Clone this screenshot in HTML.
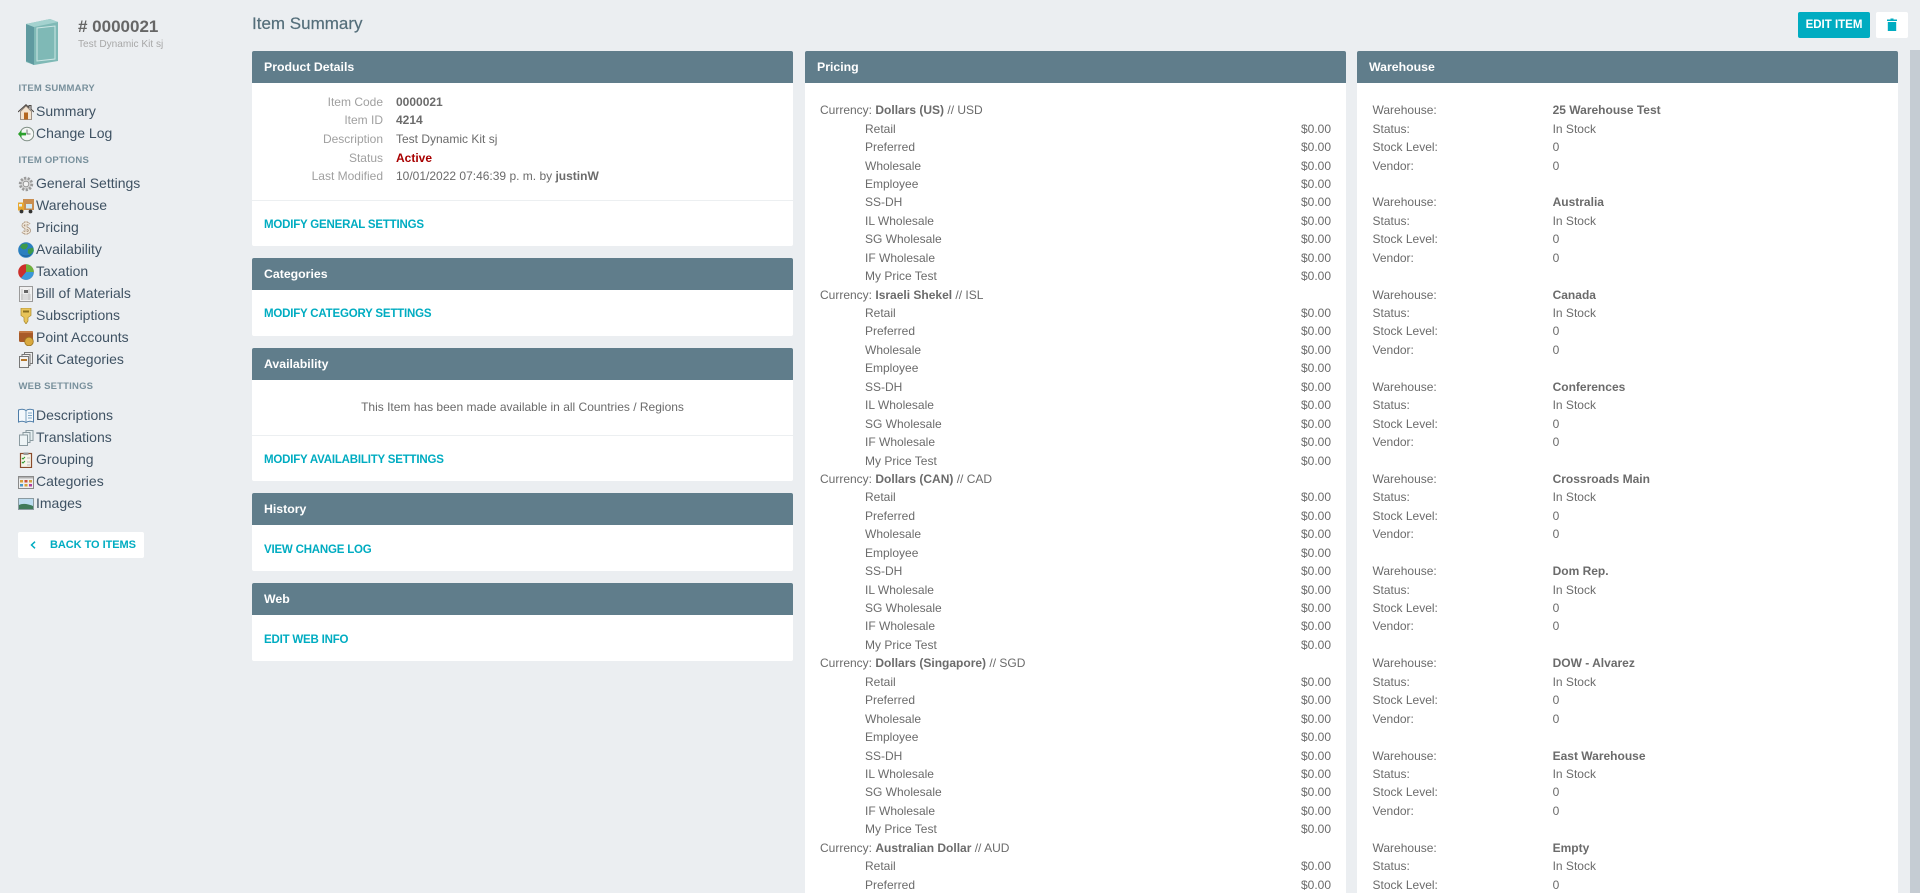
<!DOCTYPE html>
<html><head><meta charset="utf-8"><title>Item Summary</title>
<style>
html,body{margin:0;padding:0;width:1920px;height:893px;overflow:hidden;background:#ebeef1;font-family:"Liberation Sans",sans-serif;font-size:12px;color:#6b6b6b}
.a{position:absolute}
.nav{position:absolute;left:36px;font-size:14px;line-height:22px;height:22px;color:#3f5263;white-space:nowrap;margin-top:-1px}
.ic{position:absolute;left:18px;width:16px;height:16px}
.sec{position:absolute;left:18.5px;font-size:9.5px;font-weight:bold;color:#78909c;line-height:12px;letter-spacing:.2px}
.p{position:absolute;background:#fff;border-radius:2px;overflow:hidden}
.h{height:32px;line-height:32px;background:#607d8b;color:#fff;font-weight:bold;font-size:12.3px;padding-left:12px}
.l{position:absolute;left:12px;color:#00acc1;font-weight:bold;font-size:11.5px;letter-spacing:-.2px;line-height:14px;white-space:nowrap;margin-top:1px}
.hr{position:absolute;left:0;right:0;height:1px;background:#eceff1}
.d{position:absolute;right:410px;text-align:right;color:#a0a0a0;line-height:18px;white-space:nowrap}
.v{position:absolute;left:144px;line-height:18px;white-space:nowrap}
.r{display:flex;height:18.45px;line-height:18.45px;white-space:nowrap}
#pr{position:absolute;left:15px;right:15px;top:50.2px}
#pr i{font-style:normal;padding-left:45px;flex:1}
#wh{position:absolute;left:15.500px;top:50.2px}
#wh span{width:180.1px}
</style></head><body>

<svg class="a" style="left:24px;top:17px" width="36" height="50" viewBox="0 0 36 50">
<polygon points="2,7 26,2 34,5 34,44 10,48 2,45" fill="#7fb9b6"/>
<polygon points="2,7 10,10 10,48 2,44" fill="#5f9aa0"/>
<polygon points="2,7 26,2 34,5 10,10" fill="#a4d2cf"/>
<polygon points="13,11 31,9 31,42 13,44" fill="none" stroke="#cde6e4" stroke-width="1"/>
</svg>
<div class="a" style="left:78px;top:17px;font-size:17px;font-weight:bold;color:#666;line-height:20px">#&nbsp;0000021</div>
<div class="a" style="left:78px;top:38px;font-size:10.1px;color:#a8a8a8;line-height:13px">Test Dynamic Kit sj</div>

<div class="sec" style="top:83px">ITEM SUMMARY</div>
<svg class="ic" style="top:104px" viewBox="0 0 16 16"><path d="M2.500 7.500V15.500h11V7.500L8 2z" fill="#f3e3cf" stroke="#8a7a6c" stroke-width=".8"/><path d="M0 8 8 .8 11 3.500V1.500h2v3.800L16 8" fill="none" stroke="#4f4a46" stroke-width="1.100"/><rect x="6" y="8.500" width="4" height="7" fill="#b4661e"/></svg>
<div class="nav" style="top:101px">Summary</div>
<svg class="ic" style="top:126px" viewBox="0 0 16 16"><circle cx="9" cy="8" r="6.800" fill="#f4f6f4" stroke="#7a8a80" stroke-width="1"/><path d="M9 3.500V8h3.500" fill="none" stroke="#555" stroke-width=".8"/><path d="M0 8l3.500-4V6.800H8v2.600H3.500V12z" fill="#2ca02c"/></svg>
<div class="nav" style="top:123px">Change Log</div>

<div class="sec" style="top:155px">ITEM OPTIONS</div>
<svg class="ic" style="top:176px" viewBox="0 0 16 16"><circle cx="8" cy="8" r="5.800" fill="#d5d5d5" stroke="#9a9a9a" stroke-width="2.800" stroke-dasharray="2.200 1.400"/><circle cx="8" cy="8" r="2.800" fill="#f2f2f2" stroke="#888" stroke-width=".8"/></svg>
<div class="nav" style="top:173px">General Settings</div>
<svg class="ic" style="top:198px" viewBox="0 0 16 16"><rect x="5" y="1" width="11" height="11" fill="#c98e50"/><rect x="0" y="4.500" width="6" height="8" fill="#e8a830"/><rect x="8" y="6" width="6" height="4.500" fill="#cfe8f5"/><rect x="1" y="6" width="3" height="2.500" fill="#dff0f8"/><circle cx="3.500" cy="13.500" r="1.900" fill="#333"/><circle cx="12.500" cy="13.500" r="1.900" fill="#333"/></svg>
<div class="nav" style="top:195px">Warehouse</div>
<svg class="ic" style="top:220px" viewBox="0 0 16 16"><g fill="none"><path d="M11.500 4.500C10 3 5 3 5 5.500S11.500 7.500 11.500 10.500 6 13 4.500 11.500M8 1v14" stroke="#a89078" stroke-width="2.800"/><path d="M11.500 4.500C10 3 5 3 5 5.500S11.500 7.500 11.500 10.500 6 13 4.500 11.500M8 1v14" stroke="#f0e8dc" stroke-width="1.400"/></g></svg>
<div class="nav" style="top:217px">Pricing</div>
<svg class="ic" style="top:242px" viewBox="0 0 16 16"><circle cx="8" cy="8" r="7.800" fill="#2a7fc0"/><path d="M4 2 9 1.500 10 4 8 7 5 7.500 2 5zM10 7l5-1.500.8 3.500-3.500 4-2.500-2z" fill="#3d9a4a"/><path d="M2 11c3 3.500 9 3.500 12 0-3 5-9 5-12 0z" fill="#1b5f9a"/></svg>
<div class="nav" style="top:239px">Availability</div>
<svg class="ic" style="top:264px" viewBox="0 0 16 16"><circle cx="8" cy="8" r="7.800" fill="#cc2f2a"/><path d="M8 8V.2A7.800 7.800 0 0 1 15.800 8z" fill="#6cb33f"/><path d="M8 8h7.800A7.800 7.800 0 0 1 3 14z" fill="#3a98d8"/></svg>
<div class="nav" style="top:261px">Taxation</div>
<svg class="ic" style="top:286px" viewBox="0 0 16 16"><rect x="1.500" y=".5" width="13" height="15" fill="#f0f0f0" stroke="#9a9a9a"/><rect x="6" y="4" width="4" height="3" fill="#666"/><path d="M3 9h10M3 11h10M3 13h10M11 3v11M4 3v11" stroke="#b8b8b8" stroke-width=".8"/></svg>
<div class="nav" style="top:283px">Bill of Materials</div>
<svg class="ic" style="top:308px" viewBox="0 0 16 16"><path d="M3 0h10v7.500L10 9.500V13l-2 3-2-3V9.500L3 7.500z" fill="#e8c45a" stroke="#a98a30" stroke-width=".7"/><rect x="5" y="2.500" width="6" height="2" fill="#8a6f20"/></svg>
<div class="nav" style="top:305px">Subscriptions</div>
<svg class="ic" style="top:330px" viewBox="0 0 16 16"><rect x="1" y="1" width="14" height="11" rx="1.500" fill="#a85a28"/><rect x="1" y="1" width="14" height="2" rx="1" fill="#c47a45"/><circle cx="11" cy="11.500" r="4.300" fill="#d9a93f" stroke="#9c7420" stroke-width=".8"/></svg>
<div class="nav" style="top:327px">Point Accounts</div>
<svg class="ic" style="top:352px" viewBox="0 0 16 16"><rect x="6.500" y=".5" width="8" height="11" fill="#eee" stroke="#777"/><rect x="4" y="2.500" width="8" height="11" fill="#eee" stroke="#777"/><rect x="1.500" y="4.500" width="9" height="11" fill="#f2f2f2" stroke="#777"/><rect x="3" y="7" width="6" height="2" fill="#b5762a"/></svg>
<div class="nav" style="top:349px">Kit Categories</div>

<div class="sec" style="top:381px">WEB SETTINGS</div>
<svg class="ic" style="top:408px" viewBox="0 0 16 16"><path d="M.5 2C3 1 6 1 8 2.500 10 1 13 1 15.500 2v12C13 13 10 13 8 14.500 6 13 3 13 .5 14z" fill="#f3f8fc" stroke="#4d7ca8"/><path d="M8 2.500v12M10 5h4M10 7.500h4M10 10h4" stroke="#5a8ab0" stroke-width=".8"/></svg>
<div class="nav" style="top:405px">Descriptions</div>
<svg class="ic" style="top:430px" viewBox="0 0 16 16"><rect x="8" y=".5" width="7" height="10" fill="#e8f0f2" stroke="#8a9aa0"/><rect x="5" y="2.500" width="7" height="10" fill="#e8f0f2" stroke="#8a9aa0"/><rect x="1.500" y="5" width="8" height="10.500" fill="#eef4f6" stroke="#8a9aa0"/></svg>
<div class="nav" style="top:427px">Translations</div>
<svg class="ic" style="top:452px" viewBox="0 0 16 16"><rect x="2.500" y="1.500" width="11" height="14" fill="#f6f4ea" stroke="#8a4b2a" stroke-width="1.200"/><rect x="5.500" y=".5" width="5" height="2.500" fill="#999"/><path d="M4 6l1 1 2-2M4 10l1 1 2-2" fill="none" stroke="#2a9a2a" stroke-width="1"/><path d="M9 6h3M9 10h3M9 13h3" stroke="#aaa" stroke-width=".8"/></svg>
<div class="nav" style="top:449px">Grouping</div>
<svg class="ic" style="top:474px" viewBox="0 0 16 16"><rect x=".5" y="2.500" width="15" height="12" fill="#eee" stroke="#8a8a8a"/><rect x="1" y="3" width="14" height="1.500" fill="#b0b0b0"/><rect x="2" y="6" width="3" height="2.500" fill="#d8a038"/><rect x="6.500" y="6" width="3" height="2.500" fill="#c8503a"/><rect x="11" y="6" width="3" height="2.500" fill="#d0a040"/><rect x="2" y="10" width="3" height="2.500" fill="#4a98c8"/><rect x="6.500" y="10" width="3" height="2.500" fill="#d8a038"/><rect x="11" y="10" width="3" height="2.500" fill="#b040a0"/></svg>
<div class="nav" style="top:471px">Categories</div>
<svg class="ic" style="top:496px" viewBox="0 0 16 16"><rect x=".5" y="2.500" width="15" height="11" fill="#bcdcf0" stroke="#8a9aa0"/><path d="M1 9c4-2 9-1 14 1v3H1z" fill="#3f7a5a"/></svg>
<div class="nav" style="top:493px">Images</div>

<div class="a" style="left:18px;top:532px;width:126px;height:26px;background:#fff;border-radius:2px"></div>
<svg class="a" style="left:30px;top:541px" width="6" height="8" viewBox="0 0 6 8"><path d="M5 .7 1.500 4 5 7.300" fill="none" stroke="#00acc1" stroke-width="1.500"/></svg>
<div class="a" style="left:50px;top:538px;color:#00acc1;font-weight:bold;font-size:11px;line-height:14px;white-space:nowrap;letter-spacing:-.05px">BACK TO ITEMS</div>

<div class="a" style="left:252px;top:14px;font-size:17px;line-height:20px;color:#546e7a;-webkit-text-stroke:.2px #546e7a">Item Summary</div>
<div class="a" style="left:1798px;top:12px;width:72px;height:26px;background:#00acc1;border-radius:2px;color:#fff;font-weight:bold;font-size:11.500px;line-height:26px;text-align:center">EDIT ITEM</div>
<div class="a" style="left:1876px;top:12px;width:32px;height:26px;background:#fff;border-radius:2px"></div>
<svg class="a" style="left:1887px;top:18px" width="10" height="13" viewBox="0 0 10 13"><path d="M0 1.500h3.500V.5h3v1H10V3H0zM.8 4h8.400v9H.8z" fill="#00acc1"/></svg>
<div class="a" style="left:1910px;top:50px;width:10px;height:843px;background:#c5ccd3"></div>

<div class="p" style="left:252px;top:51px;width:541px;height:195px"><div class="h">Product Details</div>
<div class="d" style="top:42px">Item Code</div><div class="v" style="left:144px;top:42px"><b>0000021</b></div>
<div class="d" style="top:60px">Item ID</div><div class="v" style="top:60px"><b>4214</b></div>
<div class="d" style="top:79px">Description</div><div class="v" style="top:79px">Test Dynamic Kit sj</div>
<div class="d" style="top:98px">Status</div><div class="v" style="top:98px;color:#a80000"><b>Active</b></div>
<div class="d" style="top:116px">Last Modified</div><div class="v" style="top:116px">10/01/2022 07:46:39 p. m. by <b>justinW</b></div>
<div class="hr" style="top:149px"></div>
<div class="l" style="top:166px">MODIFY GENERAL SETTINGS</div></div>

<div class="p" style="left:252px;top:258px;width:541px;height:78px"><div class="h">Categories</div><div class="l" style="top:48px">MODIFY CATEGORY SETTINGS</div></div>

<div class="p" style="left:252px;top:348px;width:541px;height:133px"><div class="h">Availability</div>
<div class="a" style="left:0;right:0;top:50px;text-align:center;line-height:18px">This Item has been made available in all Countries / Regions</div>
<div class="hr" style="top:87px"></div>
<div class="l" style="top:104px">MODIFY AVAILABILITY SETTINGS</div></div>

<div class="p" style="left:252px;top:493px;width:541px;height:78px"><div class="h">History</div><div class="l" style="top:49px">VIEW CHANGE LOG</div></div>

<div class="p" style="left:252px;top:583px;width:541px;height:78px"><div class="h">Web</div><div class="l" style="top:49px">EDIT WEB INFO</div></div>

<div class="p" style="left:805px;top:51px;width:541px;height:842px;border-radius:2px 2px 0 0"><div class="h">Pricing</div>
<div id="pr">
<div class="r"><span>Currency: <b>Dollars (US)</b> // USD</span></div>
<div class="r"><i>Retail</i>$0.00</div><div class="r"><i>Preferred</i>$0.00</div><div class="r"><i>Wholesale</i>$0.00</div><div class="r"><i>Employee</i>$0.00</div><div class="r"><i>SS-DH</i>$0.00</div><div class="r"><i>IL Wholesale</i>$0.00</div><div class="r"><i>SG Wholesale</i>$0.00</div><div class="r"><i>IF Wholesale</i>$0.00</div><div class="r"><i>My Price Test</i>$0.00</div>
<div class="r"><span>Currency: <b>Israeli Shekel</b> // ISL</span></div>
<div class="r"><i>Retail</i>$0.00</div><div class="r"><i>Preferred</i>$0.00</div><div class="r"><i>Wholesale</i>$0.00</div><div class="r"><i>Employee</i>$0.00</div><div class="r"><i>SS-DH</i>$0.00</div><div class="r"><i>IL Wholesale</i>$0.00</div><div class="r"><i>SG Wholesale</i>$0.00</div><div class="r"><i>IF Wholesale</i>$0.00</div><div class="r"><i>My Price Test</i>$0.00</div>
<div class="r"><span>Currency: <b>Dollars (CAN)</b> // CAD</span></div>
<div class="r"><i>Retail</i>$0.00</div><div class="r"><i>Preferred</i>$0.00</div><div class="r"><i>Wholesale</i>$0.00</div><div class="r"><i>Employee</i>$0.00</div><div class="r"><i>SS-DH</i>$0.00</div><div class="r"><i>IL Wholesale</i>$0.00</div><div class="r"><i>SG Wholesale</i>$0.00</div><div class="r"><i>IF Wholesale</i>$0.00</div><div class="r"><i>My Price Test</i>$0.00</div>
<div class="r"><span>Currency: <b>Dollars (Singapore)</b> // SGD</span></div>
<div class="r"><i>Retail</i>$0.00</div><div class="r"><i>Preferred</i>$0.00</div><div class="r"><i>Wholesale</i>$0.00</div><div class="r"><i>Employee</i>$0.00</div><div class="r"><i>SS-DH</i>$0.00</div><div class="r"><i>IL Wholesale</i>$0.00</div><div class="r"><i>SG Wholesale</i>$0.00</div><div class="r"><i>IF Wholesale</i>$0.00</div><div class="r"><i>My Price Test</i>$0.00</div>
<div class="r"><span>Currency: <b>Australian Dollar</b> // AUD</span></div>
<div class="r"><i>Retail</i>$0.00</div><div class="r"><i>Preferred</i>$0.00</div>
</div></div>

<div class="p" style="left:1357px;top:51px;width:541px;height:842px;border-radius:2px 2px 0 0"><div class="h">Warehouse</div>
<div id="wh">
<div class="r"><span>Warehouse:</span><b>25 Warehouse Test</b></div><div class="r"><span>Status:</span>In Stock</div><div class="r"><span>Stock Level:</span>0</div><div class="r"><span>Vendor:</span>0</div><div class="r"></div>
<div class="r"><span>Warehouse:</span><b>Australia</b></div><div class="r"><span>Status:</span>In Stock</div><div class="r"><span>Stock Level:</span>0</div><div class="r"><span>Vendor:</span>0</div><div class="r"></div>
<div class="r"><span>Warehouse:</span><b>Canada</b></div><div class="r"><span>Status:</span>In Stock</div><div class="r"><span>Stock Level:</span>0</div><div class="r"><span>Vendor:</span>0</div><div class="r"></div>
<div class="r"><span>Warehouse:</span><b>Conferences</b></div><div class="r"><span>Status:</span>In Stock</div><div class="r"><span>Stock Level:</span>0</div><div class="r"><span>Vendor:</span>0</div><div class="r"></div>
<div class="r"><span>Warehouse:</span><b>Crossroads Main</b></div><div class="r"><span>Status:</span>In Stock</div><div class="r"><span>Stock Level:</span>0</div><div class="r"><span>Vendor:</span>0</div><div class="r"></div>
<div class="r"><span>Warehouse:</span><b>Dom Rep.</b></div><div class="r"><span>Status:</span>In Stock</div><div class="r"><span>Stock Level:</span>0</div><div class="r"><span>Vendor:</span>0</div><div class="r"></div>
<div class="r"><span>Warehouse:</span><b>DOW - Alvarez</b></div><div class="r"><span>Status:</span>In Stock</div><div class="r"><span>Stock Level:</span>0</div><div class="r"><span>Vendor:</span>0</div><div class="r"></div>
<div class="r"><span>Warehouse:</span><b>East Warehouse</b></div><div class="r"><span>Status:</span>In Stock</div><div class="r"><span>Stock Level:</span>0</div><div class="r"><span>Vendor:</span>0</div><div class="r"></div>
<div class="r"><span>Warehouse:</span><b>Empty</b></div><div class="r"><span>Status:</span>In Stock</div><div class="r"><span>Stock Level:</span>0</div>
</div></div>
</body></html>
